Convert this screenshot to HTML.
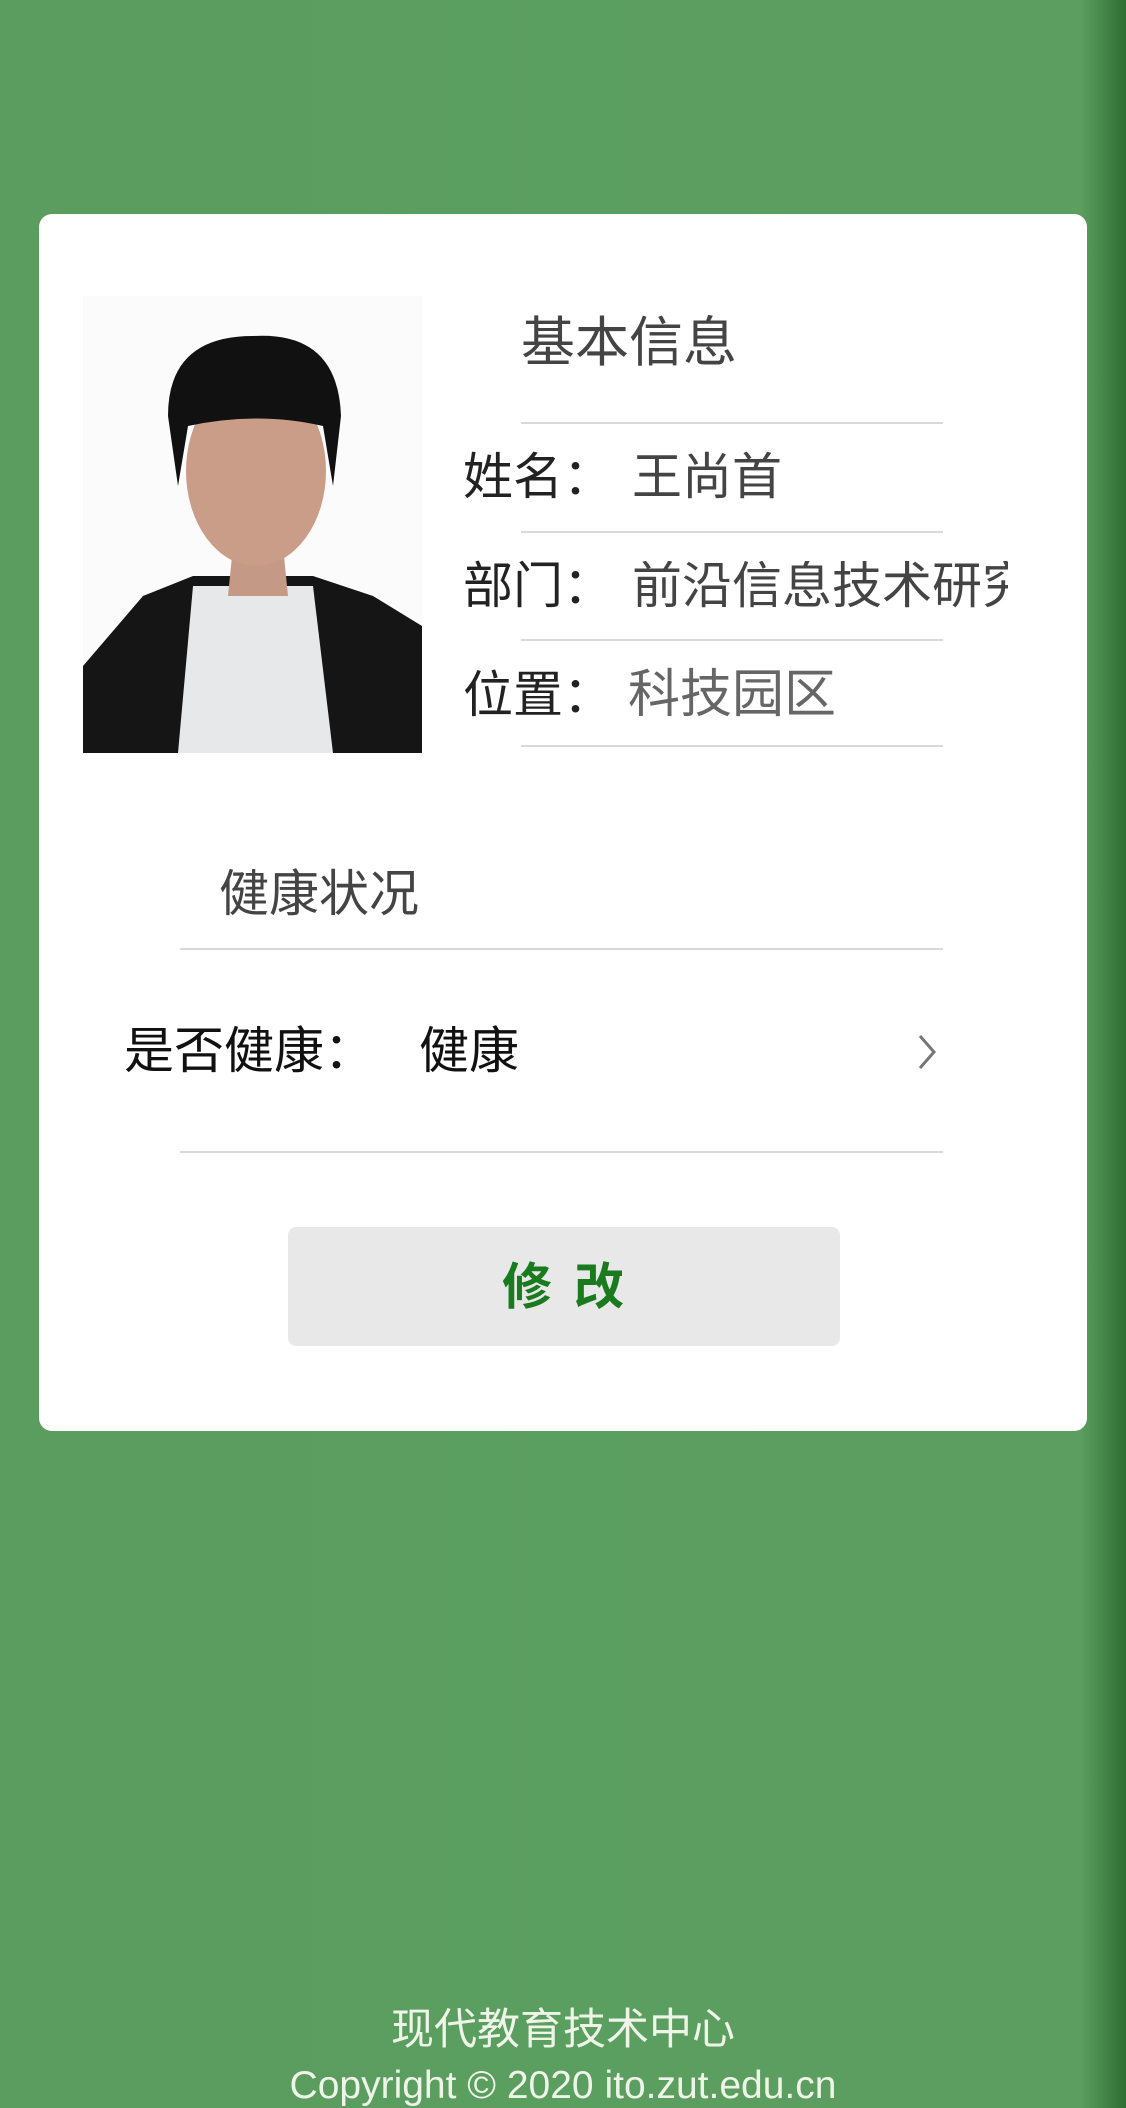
<!DOCTYPE html>
<html><head><meta charset="utf-8"><style>
*{margin:0;padding:0;box-sizing:border-box}
body{width:1126px;height:2108px;background:linear-gradient(90deg,#5a9d5f 0%,#5b9e60 96%,#3f8044 98.5%,#2f6d33 100%);position:relative;overflow:hidden;font-family:"Liberation Sans","Noto Sans CJK SC",sans-serif}
.card{position:absolute;left:39px;top:214px;width:1048px;height:1217px;background:#fff;border-radius:13px}
.t{position:absolute;white-space:nowrap;line-height:1}
.line{position:absolute;height:2px;background:#d9d9d9}
.btn{position:absolute;left:288px;top:1227px;width:552px;height:119px;background:#e8e8e8;border-radius:8px}
</style></head><body>
<div class="card"></div>
<svg style="position:absolute;left:83px;top:296px" width="339" height="457" viewBox="0 0 339 457">
<rect width="339" height="457" fill="#fbfbfb"/>
<path d="M0 370 L60 300 L110 280 L230 280 L290 300 L339 330 L339 457 L0 457Z" fill="#151515"/>
<path d="M110 290 L230 290 L250 457 L95 457Z" fill="#e6e8ea"/>
<path d="M150 250 L200 250 L205 300 L145 300Z" fill="#c49a86"/>
<ellipse cx="173" cy="175" rx="70" ry="95" fill="#c99d88"/>
<path d="M85 120 Q85 40 170 40 Q255 35 258 120 L250 190 L240 130 Q175 115 105 130 L95 190Z" fill="#111"/>
</svg>
<div class="t" style="left:521px;top:316px;font-size:54px;color:#444">基本信息</div>
<div class="line" style="left:521px;top:422px;width:422px"></div>
<div class="t" style="left:463px;top:452px;font-size:50px;color:#222">姓名：</div>
<div class="t" style="left:632px;top:452px;font-size:50px;color:#444">王尚首</div>
<div class="line" style="left:521px;top:531px;width:422px"></div>
<div class="t" style="left:463px;top:561px;font-size:50px;color:#222">部门：</div>
<div style="position:absolute;left:632px;top:561px;width:376px;overflow:hidden"><div class="t" style="position:static;font-size:50px;color:#444">前沿信息技术研究院</div></div>
<div class="line" style="left:521px;top:639px;width:422px"></div>
<div class="t" style="left:628px;top:669px;font-size:52px;color:#666">科技园区</div>
<div class="t" style="left:463px;top:670px;font-size:50px;color:#222">位置：</div>
<div class="line" style="left:521px;top:745px;width:422px"></div>
<div class="t" style="left:219px;top:869px;font-size:50px;color:#444">健康状况</div>
<div class="line" style="left:180px;top:948px;width:763px"></div>
<div class="t" style="left:124px;top:1026px;font-size:50px;color:#111">是否健康：</div>
<div class="t" style="left:419px;top:1026px;font-size:50px;color:#111">健康</div>
<svg style="position:absolute;left:914px;top:1032px" width="26" height="40" viewBox="0 0 26 40"><path d="M6 4 L20 20 L6 36" fill="none" stroke="#777" stroke-width="3"/></svg>
<div class="line" style="left:180px;top:1151px;width:763px"></div>
<div class="btn"></div>
<div class="t" style="left:0;width:1126px;text-align:center;top:1262px;font-size:50px;color:#1a7a1e;font-weight:bold;letter-spacing:22px;text-indent:22px">修改</div>
<div class="t" style="left:0;width:1126px;text-align:center;top:2009px;font-size:43px;color:#eef4e8">现代教育技术中心</div>
<div class="t" style="left:0;width:1126px;text-align:center;top:2066px;font-size:39px;color:#eef4e8">Copyright © 2020 ito.zut.edu.cn</div>
</body></html>
